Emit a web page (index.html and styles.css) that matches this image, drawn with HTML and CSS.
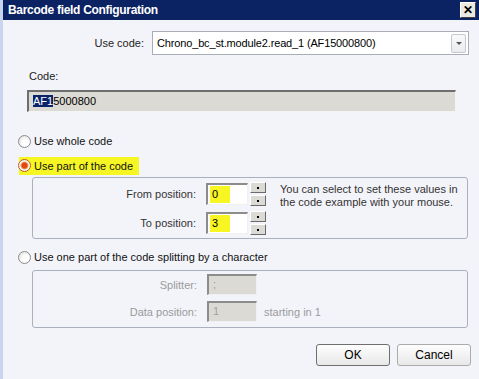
FILE: index.html
```html
<!DOCTYPE html>
<html lang="en">
<head>
    <meta charset="UTF-8">
    <link rel="stylesheet" href="styles.css">
</head>
<body>
<div class="window">
    <div class="titlebar">
        <span class="title">Barcode field Configuration</span>
        <div class="close">&#x2715;</div>
    </div>
    <div class="content">
        <div class="code-row">
            <span class="code-label">Use code:</span>
            <div class="select">
                <span>Chrono_bc_st.module2.read_1 (AF15000800)</span>
                <div class="select-arrow"></div>
            </div>
        </div>
        <div class="field-label">Code:</div>
        <div class="code-field"><span class="selected">AF1</span>5000800</div>

        <div class="radio-row first">
            <span class="radio"></span>
            <span>Use whole code</span>
        </div>
        <div class="radio-row">
            <span class="marked">
                <span class="radio checked"></span>
                <span>Use part of the code</span>
            </span>
        </div>
        <div class="group part">
            <span class="label">From position:</span>
            <div class="input"><span class="mark">0</span></div>
            <div class="spin"><div></div><div></div></div>
            <div class="hint">You can select to set these values in the code example with your mouse.</div>
            <span class="label">To position:</span>
            <div class="input"><span class="mark">3</span></div>
            <div class="spin"><div></div><div></div></div>
        </div>

        <div class="radio-row third">
            <span class="radio"></span>
            <span>Use one part of the code splitting by a character</span>
        </div>
        <div class="group split">
            <span class="label">Splitter:</span>
            <div class="input disabled">;</div>
            <span></span>
            <span class="label">Data position:</span>
            <div class="input disabled">1</div>
            <span class="note">starting in 1</span>
        </div>

        <div class="buttons">
            <div class="button default">OK</div>
            <div class="button">Cancel</div>
        </div>
    </div>
</div>
</body>
</html>
```

FILE: styles.css
```css
body {
    margin: 0;
    font-family: 'Liberation Sans', Arial, sans-serif;
    font-size: 11px;
    color: #000;
}
.window {
    width: 476px;
    height: 379px;
    border-left: 3px solid #c8d5ee;
    background: #f3f4fa;
    overflow: hidden;
}
.titlebar {
    height: 20px;
    background: #0b2263;
    display: flex;
    align-items: center;
    justify-content: space-between;
    padding: 0 3px 0 5px;
}
.title {
    color: #fff;
    font-weight: bold;
    font-size: 12px;
    letter-spacing: -0.3px;
    font-family: 'Liberation Sans', Arial, sans-serif;
}
.close {
    width: 14px;
    height: 14px;
    background: #ece9e2;
    border: 1px solid #fff;
    border-right-color: #404040;
    border-bottom-color: #404040;
    font-size: 12px;
    font-weight: bold;
    line-height: 14px;
    text-align: center;
}
.content {
    padding: 0 7px 0 15px;
}
.code-row {
    display: flex;
    align-items: center;
    margin-top: 11px;
}
.code-label {
    width: 126px;
    text-align: right;
    color: #222;
}
.select {
    margin-left: 8px;
    background: #fff;
    border: 1px solid #a9adb5;
    display: flex;
    align-items: center;
    justify-content: space-between;
    padding-left: 4px;
    box-sizing: border-box;
    width: 317px;
    height: 24px;
    letter-spacing: -0.15px;
}
.select-arrow {
    width: 13px;
    height: 17px;
    margin-right: 2px;
    border: 1px solid #c4c8d0;
    border-radius: 2px;
    background: linear-gradient(#fafafa, #e9ebef);
    position: relative;
}
.select-arrow:after {
    content: '';
    position: absolute;
    left: 4px;
    top: 7px;
    border: 3px solid transparent;
    border-top: 3px solid #555;
}
.field-label {
    margin: 14px 0 0 11px;
    line-height: 14px;
    color: #222;
}
.code-field {
    margin: 7px 0 0 9px;
    width: 429px;
    height: 22px;
    box-sizing: border-box;
    background: #dcdad4;
    border: 1px solid #f4f4f4;
    border-top: 2px solid #6e6e6e;
    border-left: 2px solid #6e6e6e;
    padding-left: 4px;
    font-size: 11px;
    line-height: 19px;
}
.selected {
    background: #0a246a;
    color: #fff;
}
.radio-row {
    display: flex;
    align-items: center;
    height: 14px;
    margin-top: 11px;
    color: #111;
}
.radio-row.first {
    margin-top: 22px;
}
.radio-row.third {
    margin-top: 11px;
}
.marked {
    display: flex;
    align-items: center;
    background: #f6f625;
    margin-left: 1px;
    padding: 2px 6px 3px 0;
}
.radio {
    width: 11px;
    height: 11px;
    border: 1px solid #8c8c8c;
    border-radius: 50%;
    background: radial-gradient(circle at 60% 60%, #fff 30%, #d8d8d8 100%);
    margin-right: 3px;
}
.marked .radio {
    margin-left: -1px;
}
.radio.checked {
    background: radial-gradient(circle, #e04a10 0 2.5px, #f2a060 3.5px, #fff 4.5px, #d8d8d8 100%);
    border-color: #c05a20;
}
.group {
    margin: 4px 0 0 14px;
    width: 436px;
    box-sizing: border-box;
    border: 1px solid #aab0bc;
    border-radius: 3px;
    display: grid;
    align-items: center;
}
.group.part {
    grid-template-columns: 163px 50px 16px auto;
    column-gap: 2px;
    row-gap: 5px;
    padding: 4px 0 3px 0;
}
.group.part .input {
    margin-left: 8px;
}
.group.split {
    margin-top: 6px;
    grid-template-columns: 164px 50px auto;
    column-gap: 10px;
    row-gap: 6px;
    padding: 3px 0 5px 0;
}
.label {
    text-align: right;
    color: #333;
}
.split .label {
    color: #9a9a9a;
}
.input {
    height: 22px;
    box-sizing: border-box;
    background: #fff;
    border: 1px solid #f0f0f0;
    border-top: 2px solid #8c8c8c;
    border-left: 2px solid #8c8c8c;
    padding: 1px 0 0 2px;
}
.input.disabled {
    height: 21px;
    background: #dcdad4;
    color: #a0a0a0;
    padding: 2px 0 0 4px;
}
.mark {
    display: inline-block;
    width: 18px;
    height: 17px;
    background: #f7f522;
    line-height: 17px;
    padding-left: 2px;
}
.spin {
    display: flex;
    flex-direction: column;
    gap: 2px;
}
.spin div {
    height: 9px;
    background: #dcdad4;
    border: 1px solid #fff;
    border-right-color: #6a6a6a;
    border-bottom-color: #6a6a6a;
    position: relative;
}
.spin div:after {
    content: '';
    position: absolute;
    left: 6px;
    top: 4px;
    width: 2px;
    height: 2px;
    background: #000;
}
.hint {
    grid-row: 1 / span 2;
    grid-column: 4;
    align-self: start;
    margin-left: 12px;
    width: 178px;
    line-height: 13px;
    padding-top: 1px;
    color: #333;
}
.note {
    color: #9a9a9a;
    margin-left: -3px;
}
.buttons {
    display: flex;
    justify-content: flex-end;
    gap: 7px;
    margin: 16px 1px 0 0;
}
.button {
    width: 74px;
    height: 22px;
    box-sizing: border-box;
    border: 1px solid #acacac;
    border-radius: 3px;
    background: linear-gradient(#fdfdfd, #e8e8e8);
    text-align: center;
    line-height: 20px;
    font-size: 12px;
}
.button.default {
    border-color: #6f6f6f;
}
```
